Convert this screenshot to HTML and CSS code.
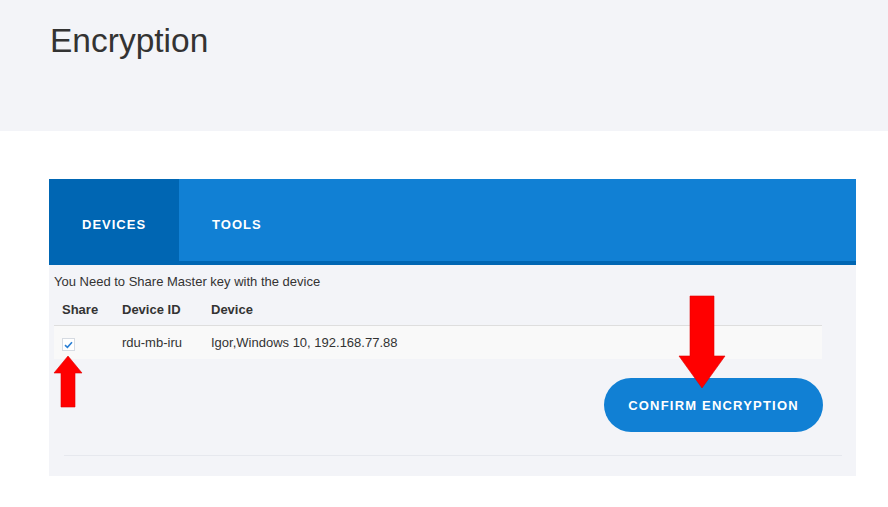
FILE: index.html
```html
<!DOCTYPE html>
<html lang="en">
<head>
    <meta charset="UTF-8">
    <meta name="viewport" content="width=device-width, initial-scale=1.0">
    <title>Encryption</title>
    <link rel="stylesheet" href="styles.css">
</head>
<body>
    <div class="page-header">
        <h1 class="title">Encryption</h1>
    </div>

    <div class="content">
        <div class="card">
            <div class="tabs">
                <div class="tab active">DEVICES</div>
                <div class="tab">TOOLS</div>
            </div>
            <div class="card-body">
                <p class="message">You Need to Share Master key with the device</p>
                <table class="device-table">
                    <thead>
                        <tr>
                            <th class="col-share">Share</th>
                            <th class="col-id">Device ID</th>
                            <th>Device</th>
                        </tr>
                    </thead>
                    <tbody>
                        <tr>
                            <td>
                                <span class="check">
                                    <svg width="9" height="8" viewBox="0 0 9 8"><path d="M1 4.2 L3.4 6.4 L8 1.2" fill="none" stroke="#2a7fd4" stroke-width="1.6"/></svg>
                                </span>
                            </td>
                            <td>rdu-mb-iru</td>
                            <td>Igor,Windows 10, 192.168.77.88</td>
                        </tr>
                    </tbody>
                </table>
                <div class="actions">
                    <button type="button" class="btn-confirm">CONFIRM ENCRYPTION</button>
                </div>
                <hr class="divider">
            </div>

            <!-- annotation arrows -->
            <svg class="arrows" width="807" height="297" viewBox="0 0 807 297">
                <polygon points="19,177 33,194 26,194 26,228 12,228 12,194 5,194" fill="#ff0000" stroke="#e00000" stroke-width="0.6"/>
                <polygon points="641,117 665,117 665,177 676,177 653,209 630,177 641,177" fill="#ff0000" stroke="#e00000" stroke-width="0.6"/>
            </svg>
        </div>
    </div>
</body>
</html>
```

FILE: styles.css
```css
body {
    font-family: "Liberation Sans", Arial, sans-serif;
    color: #333;
    background-color: #fff;
    margin: 0;
    padding: 0;
}
.page-header {
    background-color: #f3f4f8;
    height: 131px;
    padding: 21px 50px 0;
    box-sizing: border-box;
}
.title {
    margin: 0;
    font-size: 33.5px;
    line-height: 40px;
    font-weight: normal;
    color: #333;
}
.content {
    padding: 48px 0 0 49px;
}
.card {
    position: relative;
    width: 807px;
    height: 297px;
    background-color: #f3f4f8;
}
.tabs {
    display: flex;
    height: 82px;
    background-color: #1180d4;
    border-bottom: 4px solid #0066b3;
}
.tab {
    padding: 38px 33px 0;
    line-height: 16px;
    color: #fff;
    font-size: 13px;
    font-weight: bold;
    letter-spacing: 1px;
}
.tab.active {
    background-color: #0066b3;
}
.card-body {
    padding: 9px 5px 0;
}
.message {
    margin: 0;
    font-size: 13px;
    line-height: 16px;
}
.device-table {
    width: 768px;
    border-collapse: collapse;
    font-size: 13px;
}
.device-table th {
    text-align: left;
    padding: 12px 8px 7px;
    line-height: 16px;
    border-bottom: 1px solid #dedede;
}
.device-table td {
    padding: 8px 8px;
    line-height: 16px;
    background-color: #f9f9f9;
}
.col-share {
    width: 44px;
}
.col-id {
    width: 73px;
}
.check {
    display: inline-flex;
    align-items: center;
    justify-content: center;
    width: 13px;
    height: 13px;
    margin-top: 4px;
    box-sizing: border-box;
    border: 1px solid #d6dbe2;
    background-color: #fff;
    vertical-align: top;
}
.actions {
    width: 768px;
    display: flex;
    justify-content: flex-end;
    padding-top: 19px;
}
.btn-confirm {
    width: 219px;
    height: 54px;
    margin-right: -1px;
    border: none;
    border-radius: 27px;
    background-color: #1180d4;
    color: #fff;
    font-family: "Liberation Sans", Arial, sans-serif;
    font-size: 13px;
    font-weight: bold;
    letter-spacing: 1.2px;
    cursor: pointer;
}
.divider {
    margin: 23px 9px 0 10px;
    border: none;
    border-top: 1px solid #e6e8ee;
}
.arrows {
    position: absolute;
    left: 0;
    top: 0;
    pointer-events: none;
}
```
